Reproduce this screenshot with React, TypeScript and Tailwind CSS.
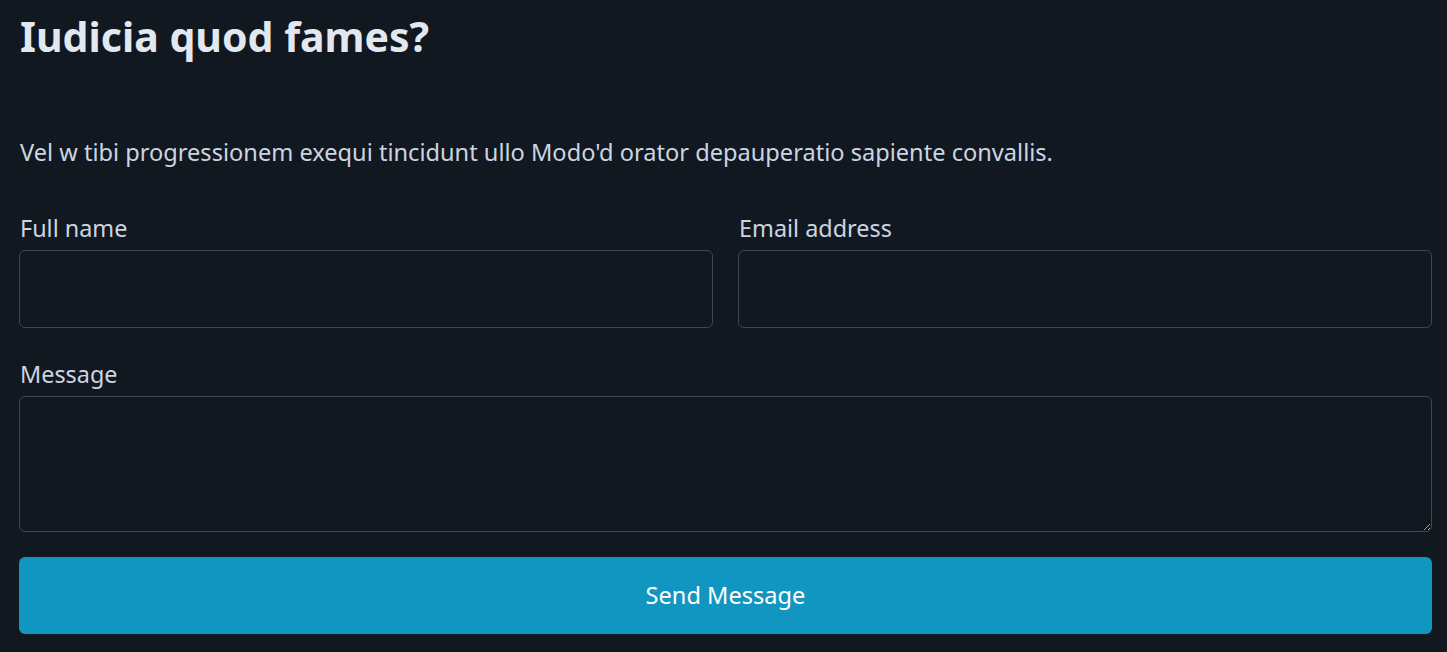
export default function App() {
  return (
    <div className="min-h-[652px] bg-[#121820] pl-[19px] pr-[15px] font-['Noto_Sans',sans-serif]">
      <h1 className="pl-px text-[41px] font-bold leading-[72px] text-[#e2e8f0]">Iudicia quod fames?</h1>
      <p className="mt-[66px] pl-px text-[23.6px] leading-[28px] text-[#cbd5e1]">
        Vel w tibi progressionem exequi tincidunt ullo Modo'd orator depauperatio sapiente convallis.
      </p>
      <form className="mt-[48px]" onSubmit={(e) => e.preventDefault()}>
        <div className="grid grid-cols-2 gap-[25px]">
          <div>
            <label className="block pl-px text-[23.4px] leading-[28px] text-[#cbd5e1]">Full name</label>
            <input type="text" className="mt-[8px] block h-[78px] w-full rounded-md border border-[#3f4753] bg-transparent px-4 text-[#e2e8f0] outline-none" />
          </div>
          <div>
            <label className="block pl-px text-[23.4px] leading-[28px] text-[#cbd5e1]">Email address</label>
            <input type="email" className="mt-[8px] block h-[78px] w-full rounded-md border border-[#3f4753] bg-transparent px-4 text-[#e2e8f0] outline-none" />
          </div>
        </div>
        <div className="mt-[32px]">
          <label className="block pl-px text-[23.4px] leading-[28px] text-[#cbd5e1]">Message</label>
          <textarea className="mt-[8px] block h-[136px] w-full rounded-md border border-[#3f4753] bg-transparent px-4 py-3 text-[#e2e8f0] outline-none" />
        </div>
        <button type="submit" className="mt-[25px] block h-[77px] w-full rounded-md bg-[#1195c1] text-[23.6px] text-white">
          Send Message
        </button>
      </form>
    </div>
  );
}
